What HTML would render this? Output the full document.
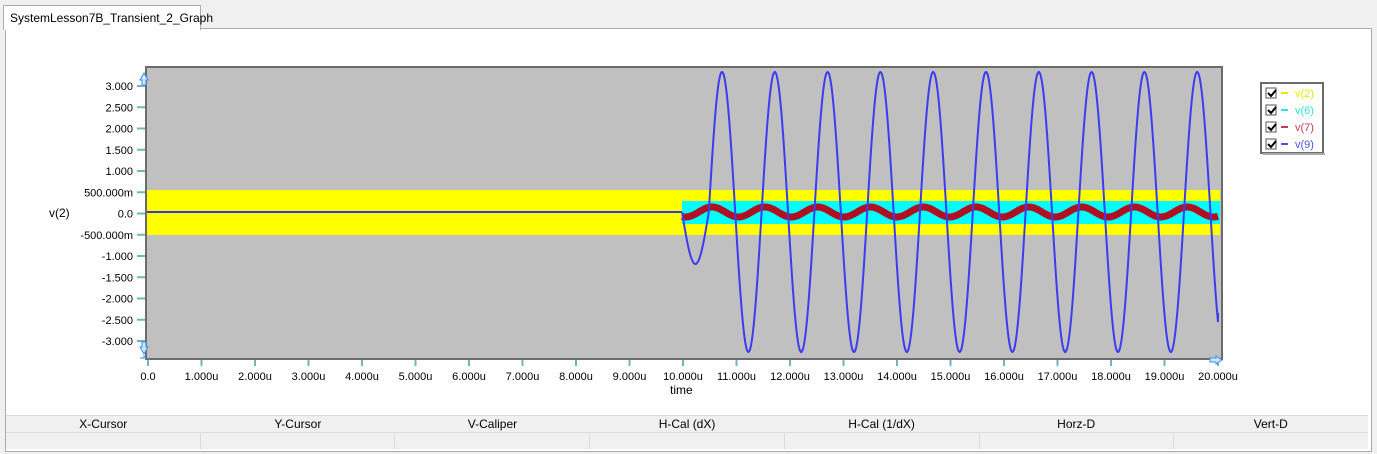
<!DOCTYPE html>
<html><head><meta charset="utf-8"><style>
body{margin:0;width:1377px;height:454px;background:#f0f0f0;position:relative;overflow:hidden;font-family:"Liberation Sans",Arial,sans-serif;}
.tab{position:absolute;left:3px;top:5px;width:196px;height:24px;background:#fff;border:1px solid #acacac;border-bottom:none;font-size:12px;line-height:24px;text-indent:6px;z-index:2}
.panel{position:absolute;left:5px;top:28px;width:1365px;height:422px;background:#fff;border:1px solid #acacac;}
.tbl{position:absolute;left:6px;top:415px;width:1362px;height:34px;font-size:12px;}
.hdr,.row{display:flex;height:16px;border-top:1px solid #dcdcdc;background:#f0f0f0}
.hdr div{flex:1;text-align:center;line-height:16px}
.row div{flex:1;border-right:1px solid #dcdcdc}
svg{position:absolute;left:0;top:0}
</style></head><body>
<div class="tab">SystemLesson7B_Transient_2_Graph</div>
<div class="panel"></div>
<svg width="1377" height="454" id="s" font-family="Liberation Sans, Arial, sans-serif" font-size="11">
<rect x="146" y="67" width="1076" height="292" fill="#c0c0c0" stroke="#6b6b6b" stroke-width="2"/>
<rect x="147" y="190" width="1073" height="45" fill="#ffff00"/>
<rect x="682" y="201" width="538" height="23" fill="#00ffff"/>
<line x1="147" y1="212" x2="682" y2="212" stroke="#3a3ad8" stroke-width="2"/>
<g id="ax"></g>
<polyline id="red" fill="none" stroke="#b01020" stroke-width="7"/>
<polyline id="blue" fill="none" stroke="#3c3cf0" stroke-width="2"/>
<text x="49" y="217" font-size="12">v(2)</text>
<text x="670" y="394" font-size="12">time</text>
<path d="M140 80 l4 -7 l4 7 h-2 v5 h-4 v-5z" fill="#cde6ff" stroke="#3c8ce6"/>
<path d="M140 347 l4 7 l4 -7 h-2 v-5 h-4 v5z" fill="#cde6ff" stroke="#3c8ce6"/>
<path d="M150 360 l-6 -4 v2 h-4" fill="none" stroke="#3c8ce6"/>
<path d="M1222 360 l-6 -4 v2 h-6 v4 h6 v2z" fill="#cde6ff" stroke="#3c8ce6"/>
<rect x="1261" y="83" width="62" height="70" fill="#fff" stroke="#6b6b6b" stroke-width="2"/>
<line x1="1263" y1="154" x2="1325" y2="154" stroke="#aaa" stroke-width="2"/>
<g id="lg" font-size="11"></g>
</svg>
<div class="tbl"><div class="hdr"><div>X-Cursor</div><div>Y-Cursor</div><div>V-Caliper</div><div>H-Cal (dX)</div><div>H-Cal (1/dX)</div><div>Horz-D</div><div>Vert-D</div></div>
<div class="row"><div></div><div></div><div></div><div></div><div></div><div></div><div style="border:none"></div></div></div>
<script>
var NS="http://www.w3.org/2000/svg",ax=document.getElementById('ax');
function el(t,a,txt){var e=document.createElementNS(NS,t);for(var k in a)e.setAttribute(k,a[k]);if(txt)e.textContent=txt;return e;}
var yl=["3.000","2.500","2.000","1.500","1.000","500.000m","0.0","-500.000m","-1.000","-1.500","-2.000","-2.500","-3.000"];
for(var i=0;i<13;i++){var y=86+i*21.25;ax.appendChild(el('line',{x1:137,y1:y,x2:145,y2:y,stroke:'#6cb8b8','stroke-width':2}));ax.appendChild(el('text',{x:133,y:y+4,'text-anchor':'end'},yl[i]));}
for(var i=0;i<=20;i++){var x=148+i*53.5;ax.appendChild(el('line',{x1:x,y1:360,x2:x,y2:366,stroke:'#6cb8b8','stroke-width':2}));var l=i==0?"0.0":i+".000u";ax.appendChild(el('text',{x:x,y:380,'text-anchor':'middle'},l));}
var P=52.8,w=2*Math.PI/P,b=[],r=[],x0=722-P/4;
for(var x=682;x<=1218;x+=0.5){var v;if(x<x0){v=-52*Math.sin(Math.PI*(x-682)/(x0-682));}else v=140*Math.cos(w*(x-722));b.push(x+","+(212-v).toFixed(1));}
b.push("1218,313");
for(var x=682;x<=1218;x+=1){r.push(x+","+(212-5*Math.cos(w*(x-712))).toFixed(1));}
document.getElementById('blue').setAttribute('points',b.join(' '));
document.getElementById('red').setAttribute('points',r.join(' '));
var lg=document.getElementById('lg'),cols=['#e8e800','#33e0e0','#c04050','#5050f0'],nm=['v(2)','v(6)','v(7)','v(9)'];
for(var i=0;i<4;i++){var y=88+i*17;lg.appendChild(el('rect',{x:1266,y:y,width:10,height:10,fill:'#fff',stroke:'#555'}));lg.appendChild(el('path',{d:'M1268 '+(y+5)+' l3 3 l5 -6',stroke:'#000','stroke-width':2,fill:'none'}));lg.appendChild(el('line',{x1:1281,y1:y+5,x2:1288,y2:y+5,stroke:cols[i],'stroke-width':2}));lg.appendChild(el('text',{x:1295,y:y+9,fill:cols[i]},nm[i]));}
</script>
</body></html>
